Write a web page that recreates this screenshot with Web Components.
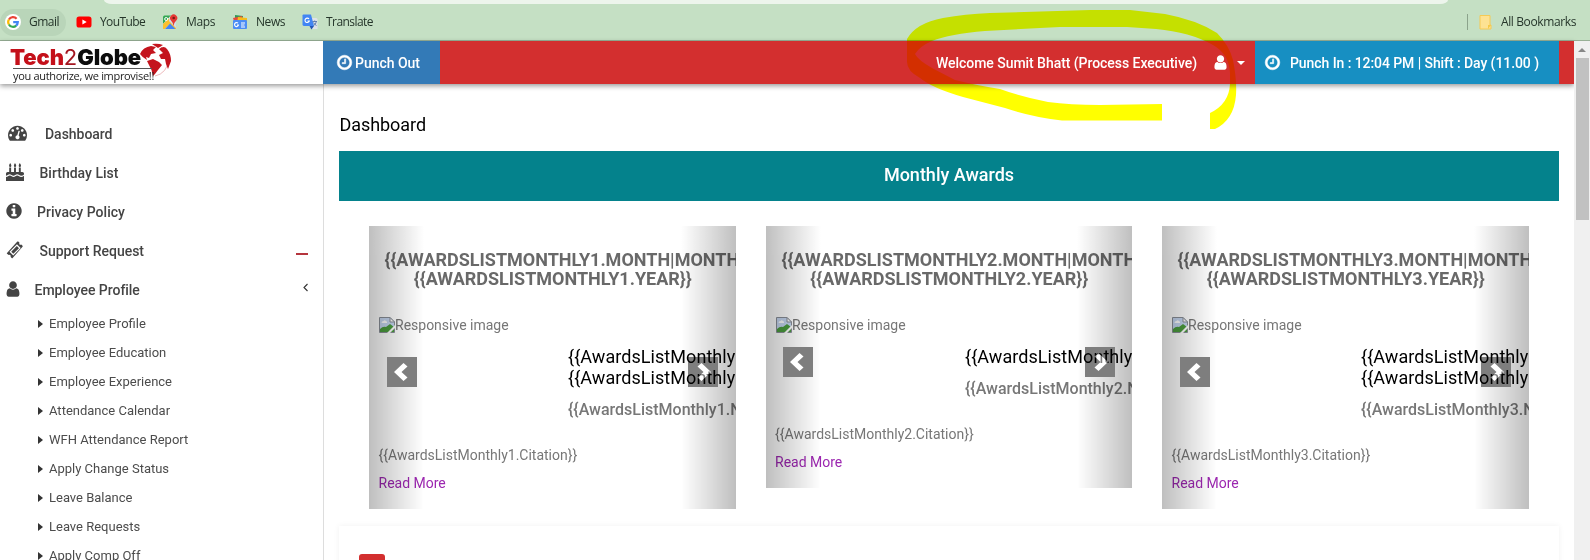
<!DOCTYPE html>
<html lang="en"><head><meta charset="utf-8"><title>Dashboard</title>
<style>
html,body{margin:0;height:100%;overflow:hidden;background:#fff}
body{font-family:Roboto,"Liberation Sans",sans-serif;font-size:14px;color:#444}
</style></head><body>
<portal-page></portal-page>
<script>
const define=(name,html,setup)=>customElements.define(name,class extends HTMLElement{
  connectedCallback(){
    if(this.shadowRoot)return;
    this.attachShadow({mode:'open'}).innerHTML=typeof html==='function'?html(this):html;
    if(setup)setup(this);
  }
});

/* Icons drawn on a 1792-unit grid */
const GLYPHS={
clock:'<path stroke="currentColor" stroke-width="50" d="M1024 544v448q0 14-9 23t-23 9h-320q-14 0-23-9t-9-23v-64q0-14 9-23t23-9h224v-352q0-14 9-23t23-9h64q14 0 23 9t9 23zm416 352q0-148-73-273t-198-198-273-73-273 73-198 198-73 273 73 273 198 198 273 73 273-73 198-198 73-273zm224 0q0 209-103 385.5t-279.5 279.5-385.5 103-385.5-103-279.5-279.5-103-385.5 103-385.5 279.5-279.5 385.5-103 385.5 103 279.5 279.5 103 385.5z"/>',
info:'<path d="M1152 1376v-160q0-14-9-23t-23-9h-96v-512q0-14-9-23t-23-9h-320q-14 0-23 9t-9 23v160q0 14 9 23t23 9h96v320h-96q-14 0-23 9t-9 23v160q0 14 9 23t23 9h448q14 0 23-9t9-23zm-128-896v-160q0-14-9-23t-23-9h-192q-14 0-23 9t-9 23v160q0 14 9 23t23 9h192q14 0 23-9t9-23zm640 416q0 209-103 385.5t-279.5 279.5-385.5 103-385.5-103-279.5-279.5-103-385.5 103-385.5 279.5-279.5 385.5-103 385.5 103 279.5 279.5 103 385.5z"/>',
user:'<path d="M1536 1399q0 109-62.5 187t-150.5 78h-854q-88 0-150.5-78t-62.5-187q0-85 8.5-160.5t31.5-152 58.5-131 94-89 134.5-34.5q131 128 313 128t313-128q76 0 134.5 34.5t94 89 58.5 131 31.5 152 8.5 160.5zm-256-887q0 159-112.5 271.5t-271.5 112.5-271.5-112.5-112.5-271.5 112.5-271.5 271.5-112.5 271.5 112.5 112.5 271.5z"/>',
gauge:'<path d="M384 1152q0-53-37.5-90.5t-90.5-37.5-90.5 37.5-37.5 90.5 37.5 90.5 90.5 37.5 90.5-37.5 37.5-90.5zm192-448q0-53-37.5-90.5t-90.5-37.5-90.5 37.5-37.5 90.5 37.5 90.5 90.5 37.5 90.5-37.5 37.5-90.5zm428 481l101-382q6-26-7.5-48.5t-38.5-29.5-48 6.5-30 39.5l-101 382q-60 5-107 43.5t-63 98.5q-20 77 20 146t117 89 146-20 89-117q16-60-6-117t-72-91zm660-33q0-53-37.5-90.5t-90.5-37.5-90.5 37.5-37.5 90.5 37.5 90.5 90.5 37.5 90.5-37.5 37.5-90.5zm-640-640q0-53-37.5-90.5t-90.5-37.5-90.5 37.5-37.5 90.5 37.5 90.5 90.5 37.5 90.5-37.5 37.5-90.5zm448 192q0-53-37.5-90.5t-90.5-37.5-90.5 37.5-37.5 90.5 37.5 90.5 90.5 37.5 90.5-37.5 37.5-90.5zm320 448q0 261-141 483-19 29-54 29h-1402q-35 0-54-29-141-221-141-483 0-182 71-348t191-286 286-191 348-71 348 71 286 191 191 286 71 348z"/>',
cake:'<path d="M0 1792V1400q110 0 200-75 90-78 180-78t185 78q90 75 185 75t185-75q90-78 180-78t185 78q90 75 200 75 150 0 292-130V1792zM0 1240V1050q0-150 160-150h160V460h190v440h290V460h190v440h290V460h190v440h160q162 0 162 150v100q-110 120-292 120-90-10-190-80-95-75-200-75t-190 75q-90 75-180 75t-190-75q-90-75-190-75t-190 75q-85 80-170 80zM415 400q-110 0-110-120 0-90 110-270 120 170 120 270 0 120-120 120zm480 0q-110 0-110-120 0-90 110-270 120 170 120 270 0 120-120 120zm480 0q-110 0-110-120 0-90 110-270 120 170 120 270 0 120-120 120z"/>',
ticket:'<path fill-rule="evenodd" d="M1130 60q45-45 90 0l125 125q-65 85 10 160t165 10l125 125q45 45 0 90L660 1700q-45 45-90 0l-125-125q65-90-10-165t-160-10L100 1275q-45-45 0-90zM1090 330L350 1070l370 370 740-740zM1080 500L1290 710 730 1270 520 1060z"/>'};
define('ui-icon',el=>{const s=el.getAttribute('size')||18;
return `<style>:host{display:block;flex:none;width:${s}px;height:${s}px}svg{display:block;overflow:visible}</style><svg width="${s}" height="${s}" viewBox="0 0 1792 1792" fill="currentColor">${GLYPHS[el.getAttribute('name')]}</svg>`});

/* Tracks its text out or in to fill the given width */
define('fit-text','<style>:host{display:block;white-space:nowrap;width:max-content}</style><slot></slot>',el=>{
  const n=el.textContent.length,w=+el.getAttribute('w');
  el.style.letterSpacing=((w-el.getBoundingClientRect().width)/n).toFixed(3)+'px';
});

/* Browser bookmarks */
const FAVICONS={
Gmail:'<circle cx="8" cy="8" r="8" fill="#fff"/><g fill="none" stroke-width="2.2"><path d="M3.9 5.5A4.8 4.8 0 0 1 11.6 4.7" stroke="#ea4335"/><path d="M3.9 5.5A4.8 4.8 0 0 0 3.9 10.5" stroke="#fbbc05"/><path d="M3.9 10.5A4.8 4.8 0 0 0 11.2 11.6" stroke="#34a853"/><path d="M8.2 8.1H12.8A4.8 4.8 0 0 1 11.1 11.6" stroke="#4285f4"/></g>',
YouTube:'<rect x="0.5" y="2.5" width="15" height="11" rx="2.6" fill="#f00"/><path d="M6.4 5.5v5l4.3-2.5z" fill="#fff"/>',
Maps:'<path d="M1 2h13v13H1z" fill="#f4f6f4"/><path d="M1 3q0-1.5 1.500-1.500H9L1 10z" fill="#34a853"/><path d="M1 10L7 4.500 14 12v3H12L7.500 10.500 3 15H1z" fill="#fbc02d"/><path d="M3 15L8 9.500l5.500 5.500z" fill="#4285f4"/><path d="M8 2l6 4v8L7 7z" fill="#d5dce4"/><path d="M11.500 12Q11 8.500 9 6.500A3.600 3.600 0 1 1 14.300 6.500Q12 8.500 11.500 12z" fill="#e53935"/><circle cx="11.700" cy="4" r="1.300" fill="#7b1a16"/><circle cx="4.200" cy="5" r="1.500" fill="none" stroke="#fff"/>',
News:'<path d="M3 1l8 1-1 6H3z" fill="#2e9c55"/><path d="M1 4l9-2 1 5H2z" fill="#e34a3d"/><path d="M6 3l9 1v5H5z" fill="#f5bb1c"/><rect x="1" y="6" width="14" height="9" rx="1" fill="#4c8df5"/><path d="M6 9.200A2 2 0 1 0 6.500 11H5M9 9h4M9 11h3.500M9 13h4" fill="none" stroke="#fff" stroke-width="1.100"/>',
Translate:'<path d="M6 4h8q1.500 0 1.500 1.500V15H10z" fill="#dfe3ea"/><path d="M1.500 0.500H9L12 12H2.500Q0.500 12 .5 10.500V1.500Q.5.500 1.500.500z" fill="#4285f4"/><path d="M7.500 12H12l-2.500 3.500z" fill="#2456b5"/><path d="M7 5A2.200 2.200 0 1 0 7.300 7H5.500" fill="none" stroke="#fff" stroke-width="1.100"/><path d="M10.500 7.500h4.500M12.700 6.500v1M11.500 11.500q2.500-1 2.800-4M11.500 8.500q1 2 3 3" stroke="#5677ad" fill="none" stroke-width=".9"/>'};
define('book-mark',el=>`<style>:host{display:flex;align-items:center;gap:8px;height:27px;border-radius:14px}svg{display:block}fit-text{margin-top:-2px}:host([active]){background:#b9d5b9}</style><svg width="16" height="16" viewBox="0 0 16 16">${FAVICONS[el.getAttribute('label')]}</svg><fit-text w="${el.getAttribute('w')}">${el.getAttribute('label')}</fit-text>`);
define('bookmarks-bar',`<style>
:host{display:flex;flex-direction:column;box-sizing:border-box;height:41px;background:#c5e0c4;border-bottom:1px solid #98b096;font:12px "Open Sans","Noto Sans",sans-serif;color:#25352a}
.omni{height:4px;margin:0 142px 0 104px;background:#edf5ec;border-radius:0 0 8px 8px/0 0 4px 4px}
.row{flex:1;display:flex;align-items:center}
book-mark{margin-right:17px}book-mark:first-child{padding:0 7px 0 5px;margin:0 10px 0 0}
.all{margin-left:auto;margin-right:14px;display:flex;align-items:center}
.all fit-text{margin-top:-2px}
.sep{width:1px;height:16px;background:#8ba38b;margin-right:11px}
.all svg{margin-right:9px}
</style><div class="omni"></div><div class="row">
<book-mark active label="Gmail" w="30"></book-mark><book-mark label="YouTube" w="45"></book-mark><book-mark label="Maps" w="29"></book-mark><book-mark label="News" w="29"></book-mark><book-mark label="Translate" w="47"></book-mark>
<div class="all"><div class="sep"></div><svg width="13" height="16" viewBox="0 0 13 16"><path d="M1 1.500h10v9.500h1v4H1z" fill="#fde293" stroke="#f5ca55"/><path d="M9 15v-4h3" fill="#f6c945"/></svg><fit-text w="75">All Bookmarks</fit-text></div></div>`);

define('brand-logo',`<style>
:host{display:flex;width:323px;height:43px;background:#fff;position:relative}
.words{margin:4px 0 0 10px;width:143px;position:relative;z-index:1}
.name{font:900 22px/24px Inter,"Open Sans",sans-serif;color:#0c0c0c;height:24px}
.name span{color:#c4101a}.name i{font-style:normal;font-weight:400;color:#a31620}
.rule{height:1px;background:#555;width:139px;margin:-1px 0 0 3px}
.tag{font:11px/13px "Open Sans",sans-serif;color:#222;margin-left:3px}
svg{position:absolute;left:139px;top:1px}
</style><div class="words"><div class="name"><fit-text w="131"><span>Tech</span><i>2</i>Globe</fit-text></div><div class="rule"></div><div class="tag"><fit-text w="141">you authorize, we improvise!!</fit-text></div></div>
<svg width="34" height="36" viewBox="0 0 34 36"><path d="M16 2.500A16 16 0 0 1 16 34" fill="none" stroke="#e7a7a9" stroke-width=".8"/><g fill="#c4141d"><path d="M1 12Q4 5 12 4L17 5 14 8 17 11 12 12 10 16 7 15 8 18Q3 15 1 12z"/><path d="M13 2Q19 1 24 3L19 6z"/><path d="M8 19L14 17 20 20 23 23 19 28 16 32 14 34 12.500 28z"/><path d="M20 7Q25 3 28 7 32 12 32 19L29 27 27 22 26 17 22 17 20 13 24 11z"/></g></svg>`);

define('top-bar',`<style>
:host{display:flex;height:43px;background:#d32f2f;color:#fff;font-weight:500;font-size:14px;box-shadow:0 2px 5px rgba(0,0,0,.4);position:relative;z-index:2}
.out{width:117px;box-sizing:border-box;background:#337ab7;display:flex;align-items:center;padding-left:13px;gap:2px}
ui-icon{margin-top:-1px}
.who{margin-left:auto;display:flex;align-items:center;color:#fff}
.who ui-icon{margin-left:15px}
.caret{border:4px solid transparent;border-top-color:#fff;border-bottom:0;margin:0 10px 0 8px}
.in{width:304px;box-sizing:border-box;background:#178fc2;margin-right:15px;padding-left:9px;display:flex;align-items:center;gap:9px}
</style><brand-logo></brand-logo><div class="out"><ui-icon name="clock" size="17"></ui-icon><fit-text w="65">Punch Out</fit-text></div>
<div class="who"><fit-text w="261">Welcome Sumit Bhatt (Process Executive)</fit-text><ui-icon name="user" size="17"></ui-icon><div class="caret"></div></div>
<div class="in"><ui-icon name="clock" size="17"></ui-icon><fit-text w="249">Punch In : 12:04 PM | Shift : Day (11.00 )</fit-text></div>`);

define('nav-item',el=>`<style>:host{display:flex;align-items:center;height:39px;font-weight:500;color:#444}.box{width:${el.getAttribute('tx')}px;box-sizing:border-box;padding-left:${el.getAttribute('ix')}px;flex:none;margin-top:-2px}.end{margin-left:auto;margin-right:15px}</style><div class="box"><ui-icon name="${el.getAttribute('icon')}" size="${el.getAttribute('size')||18}"></ui-icon></div><fit-text w="${el.getAttribute('w')}">${el.getAttribute('label')}</fit-text><div class="end"><slot></slot></div>`);
define('sub-item',`<style>:host{display:flex;align-items:center;height:29px;padding-left:38px;font-size:13px;color:#4c4c4c}i{border:4px solid transparent;border-left:5px solid #333;border-right:0;margin-right:6px}</style><i></i><span><slot></slot></span>`);
define('side-bar',`<style>:host{display:block;width:323px;border-right:1px solid #ddd;box-sizing:content-box;padding-top:30px;height:446px;overflow:hidden;background:#fff}.dash{width:12px;height:2px;background:#b5353d;margin-top:6px}.chev{display:block;margin-top:-5px}</style>
<nav-item icon="gauge" ix="8" size="19" tx="45" w="67.500" label="Dashboard"></nav-item>
<nav-item icon="cake" ix="6" tx="39.500" w="79" label="Birthday List"></nav-item>
<nav-item icon="info" ix="5" tx="37" w="88" label="Privacy Policy"></nav-item>
<nav-item icon="ticket" ix="6" tx="39.500" w="104.500" label="Support Request"><div class="dash"></div></nav-item>
<nav-item icon="user" ix="4" tx="34.500" w="105" label="Employee Profile"><svg class="chev" width="5" height="9" viewBox="0 0 5 9"><path d="M4.500 1L1 4.500 4.500 8" fill="none" stroke="#333" stroke-width="1.100"/></svg></nav-item>
<sub-item>Employee Profile</sub-item><sub-item>Employee Education</sub-item><sub-item>Employee Experience</sub-item><sub-item>Attendance Calendar</sub-item><sub-item>WFH Attendance Report</sub-item><sub-item>Apply Change Status</sub-item><sub-item>Leave Balance</sub-item><sub-item>Leave Requests</sub-item><sub-item>Apply Comp Off</sub-item>`);

define('award-card',el=>{const n=el.getAttribute('n'),two=n!=='2';
const edge=two?18:17,x=two?9.5:9;
return `<style>
:host{display:block;position:relative;box-sizing:border-box;width:${two?367:366}px;height:${two?283:262}px;overflow:hidden;color:#777;white-space:nowrap}
.title{margin:24px 15px 0 15.5px;font-weight:700;font-size:18px;line-height:19px;color:#696969}
.year{display:flex;justify-content:center}
.pic{display:flex;margin:29px 0 0 10px;line-height:16px;height:16px}
.names{margin:13px 0 0 199px;font-size:18px;line-height:21px;color:#000;letter-spacing:.06px}
.role{margin:11px 0 0 199px;font-size:16px;font-weight:500;line-height:22px}
.cite{margin:24px 0 0 ${x}px;line-height:20px}
.more{margin:8px 0 0 ${x}px;line-height:20px;color:#9c27b0}
.ctl{position:absolute;top:0;bottom:0;width:55px;opacity:.5;display:flex}
.l{left:0;background:linear-gradient(to right,rgba(0,0,0,.5),rgba(0,0,0,0))}
.r{right:0;justify-content:flex-end;background:linear-gradient(to right,rgba(0,0,0,0),rgba(0,0,0,.5))}
.btn{width:30px;height:30px;background:#000;margin:${two?131:121}px ${edge}px 0}
</style>
<div class="title"><div>{{AWARDSLISTMONTHLY${n}.MONTH|MONTHNAME}}</div><div class="year">{{AWARDSLISTMONTHLY${n}.YEAR}}</div></div>
<div class="pic"><svg width="16" height="16" viewBox="0 0 16 16"><path d="M.5.500H11L15.500 5V15.500H.5z" fill="#c7d8f2" stroke="#8b9099"/><path d="M1 12q3-3 6-2l4-3 4 3v5H1z" fill="#4c9e3f"/><path d="M2.500 6q0-2 2-2 1-1.500 2.500 0 1.500.5 1 2z" fill="#fff"/><path d="M11 .5V5h4.500z" fill="#fff" stroke="#8b9099"/><path d="M16 8L8 16h3l5-5z" fill="#fff"/></svg><span>Responsive image</span></div>
<div class="names"><div>{{AwardsListMonthly${n}.Name}}</div>${two?`<div>{{AwardsListMonthly${n}.Name}}</div>`:''}</div>
<div class="role">{{AwardsListMonthly${n}.Name}}</div>
<div class="cite">{{AwardsListMonthly${n}.Citation}}</div><div class="more">Read More</div>
<div class="ctl l"><div class="btn"><svg width="30" height="30"><path d="M16.500 6L20.500 9.500 14.500 15 20.500 20.500 16.500 24 7 15z" fill="#fff"/></svg></div></div>
<div class="ctl r"><div class="btn"><svg width="30" height="30"><path d="M13.500 6L9.500 9.500 15.500 15 9.500 20.500 13.500 24 23 15z" fill="#fff"/></svg></div></div>`});

define('dash-board',`<style>
:host{display:block;flex:1;padding:0 15px;overflow:hidden;color:#000}
h1{font-weight:400;font-size:18px;line-height:22px;margin:30px 0 0 .5px}
.bar{height:50px;line-height:48px;margin-top:15px;background:#04828c;color:#fff;text-align:center;font-size:18px;font-weight:500}
.cards{display:flex;gap:30px;margin:25px 30px 0;align-items:flex-start}
.panel{height:60px;margin-top:17px;box-shadow:0 0 6px rgba(0,0,0,.06);padding:28px 20px 0}
.tag{width:26px;height:26px;border-radius:3px;background:#d32f2f}
</style><h1><fit-text w="86.500">Dashboard</fit-text></h1><div class="bar">Monthly Awards</div>
<div class="cards"><award-card n="1"></award-card><award-card n="2"></award-card><award-card n="3"></award-card></div>
<div class="panel"><div class="tag"></div></div>`);

define('scroll-bar',`<style>:host{display:flex;flex-direction:column;align-items:center;width:16px;background:#f0f0f0;position:relative;z-index:3}i{border:4px solid transparent;border-bottom-color:#888;border-top:0;margin-top:7px}.thumb{width:13px;height:162px;background:#c1c1c1;margin:6px 0 0 1px}</style><i></i><div class="thumb"></div>`);

define('marker-stroke',`<style>:host{position:absolute;left:0;top:0;mix-blend-mode:multiply;pointer-events:none;z-index:9}svg{display:block}</style>
<svg width="1590" height="140"><path fill="#ff0" fill-rule="evenodd" d="M1162 104V120.500H1062Q1032 117 1005 108L963 97Q932 88 920 78 907 71 907 62V39Q916 23 943 18 965 14 990 13L1090 10 1130 10 1165 14Q1197 20 1217 33 1229 45 1233 60 1237 80 1236 95 1234 120 1215 129H1210V113Q1229 104 1230 84V73Q1229 54 1213 45 1190 32 1156 29L1127 27H1060L1040 28 985 31Q950 34 932 41 920 46 915 54 918 60 932 68L955 80Q975 85 1000 89 1022 97 1048 102 1070 105 1100 105z"/></svg>`);

define('portal-page',`<style>:host{display:flex;flex-direction:column;position:relative;width:1590px;height:560px;overflow:hidden;background:#fff}.view{display:flex;height:519px}.app{width:1574px;display:flex;flex-direction:column}.body{display:flex;height:476px}</style>
<bookmarks-bar></bookmarks-bar><div class="view"><div class="app"><top-bar></top-bar><div class="body"><side-bar></side-bar><dash-board></dash-board></div></div><scroll-bar></scroll-bar></div><marker-stroke></marker-stroke>`);
</script></body></html>
